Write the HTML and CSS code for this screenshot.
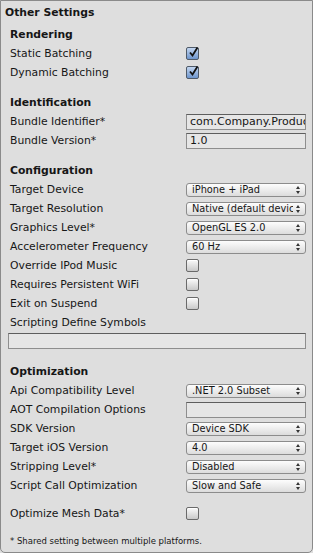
FILE: index.html
```html
<!DOCTYPE html>
<html lang="en">
<head>
    <meta charset="UTF-8">
    <meta name="viewport" content="width=device-width, initial-scale=1.0">
    <title>Other Settings</title>
    <link rel="stylesheet" href="styles.css">
</head>
<body>
    <div class="panel">
        <div class="title">Other Settings</div>

        <div class="group">
            <div class="heading">Rendering</div>
            <div class="row">
                <span class="label">Static Batching</span>
                <span class="check on"><svg viewBox="0 0 13 13"><path d="M3 6.5 L5.5 9.5 L10.5 1.5" /></svg></span>
            </div>
            <div class="row">
                <span class="label">Dynamic Batching</span>
                <span class="check on"><svg viewBox="0 0 13 13"><path d="M3 6.5 L5.5 9.5 L10.5 1.5" /></svg></span>
            </div>
        </div>

        <div class="group">
            <div class="heading">Identification</div>
            <div class="row">
                <span class="label">Bundle Identifier*</span>
                <span class="field">com.Company.ProductName</span>
            </div>
            <div class="row">
                <span class="label">Bundle Version*</span>
                <span class="field">1.0</span>
            </div>
        </div>

        <div class="group">
            <div class="heading">Configuration</div>
            <div class="row">
                <span class="label">Target Device</span>
                <span class="popup"><span class="popup-text">iPhone + iPad</span><span class="arrows"></span></span>
            </div>
            <div class="row">
                <span class="label">Target Resolution</span>
                <span class="popup"><span class="popup-text">Native (default device resolution)</span><span class="arrows"></span></span>
            </div>
            <div class="row">
                <span class="label">Graphics Level*</span>
                <span class="popup"><span class="popup-text">OpenGL ES 2.0</span><span class="arrows"></span></span>
            </div>
            <div class="row">
                <span class="label">Accelerometer Frequency</span>
                <span class="popup"><span class="popup-text">60 Hz</span><span class="arrows"></span></span>
            </div>
            <div class="row">
                <span class="label">Override IPod Music</span>
                <span class="check"></span>
            </div>
            <div class="row">
                <span class="label">Requires Persistent WiFi</span>
                <span class="check"></span>
            </div>
            <div class="row">
                <span class="label">Exit on Suspend</span>
                <span class="check"></span>
            </div>
            <div class="row">
                <span class="label">Scripting Define Symbols</span>
            </div>
            <div class="row wide">
                <span class="field"></span>
            </div>
        </div>

        <div class="group">
            <div class="heading">Optimization</div>
            <div class="row">
                <span class="label">Api Compatibility Level</span>
                <span class="popup"><span class="popup-text">.NET 2.0 Subset</span><span class="arrows"></span></span>
            </div>
            <div class="row">
                <span class="label">AOT Compilation Options</span>
                <span class="field"></span>
            </div>
            <div class="row">
                <span class="label">SDK Version</span>
                <span class="popup"><span class="popup-text">Device SDK</span><span class="arrows"></span></span>
            </div>
            <div class="row">
                <span class="label">Target iOS Version</span>
                <span class="popup"><span class="popup-text">4.0</span><span class="arrows"></span></span>
            </div>
            <div class="row">
                <span class="label">Stripping Level*</span>
                <span class="popup"><span class="popup-text">Disabled</span><span class="arrows"></span></span>
            </div>
            <div class="row">
                <span class="label">Script Call Optimization</span>
                <span class="popup"><span class="popup-text">Slow and Safe</span><span class="arrows"></span></span>
            </div>
            <div class="row spaced">
                <span class="label">Optimize Mesh Data*</span>
                <span class="check"></span>
            </div>
        </div>

        <div class="note">* Shared setting between multiple platforms.</div>
    </div>
</body>
</html>
```

FILE: styles.css
```css
body {
    margin: 0;
    background: #dedede;
    font-family: "DejaVu Sans", sans-serif;
    font-size: 10.8px;
    color: #161616;
}
.panel {
    width: 311px;
    height: 551px;
    border: 1px solid #8a8a8a;
    border-radius: 0 0 5px 5px;
    background: #dedede;
}
.title {
    height: 24px;
    line-height: 24px;
    padding-left: 4px;
    font-weight: bold;
}
.group {
    margin-bottom: 11px;
    padding: 0 6px 0 9px;
}
.heading {
    height: 19px;
    line-height: 19px;
    font-weight: bold;
}
.row {
    display: flex;
    align-items: center;
    height: 19px;
}
.row.spaced {
    margin-top: 9px;
}
.label {
    width: 176px;
    flex: none;
    white-space: nowrap;
}
.check {
    width: 11px;
    height: 11px;
    border: 1px solid #6a6a6a;
    border-radius: 2px;
    background: linear-gradient(#fafafa, #c9c9c9);
    box-shadow: inset 0 1px 0 #fff;
}
.check.on {
    background: linear-gradient(#c3d6f0, #6d95cd);
    border-color: #4f5a68;
    box-shadow: none;
}
.check svg {
    display: block;
    width: 13px;
    height: 13px;
    margin: -2px 0 0 0;
}
.check path {
    fill: none;
    stroke: #111;
    stroke-width: 1.8;
}
.field {
    flex: 1;
    height: 14px;
    line-height: 14px;
    padding-left: 3px;
    border: 1px solid #8e8e8e;
    border-top-color: #5e5e5e;
    background: #e6e6e6;
    overflow: hidden;
    white-space: nowrap;
    font-size: 11px;
}
.row.wide {
    margin-left: -2px;
    height: 19px;
    align-items: flex-start;
    padding-top: 1px;
    box-sizing: border-box;
}
.popup {
    flex: 1;
    display: flex;
    align-items: center;
    height: 12px;
    border: 1px solid #8c8c8c;
    border-radius: 3px;
    background: linear-gradient(#fdfdfd, #dcdcdc);
    font-size: 9.8px;
    overflow: hidden;
}
.popup-text {
    flex: 1;
    padding-left: 5px;
    white-space: nowrap;
    overflow: hidden;
}
.arrows {
    flex: none;
    width: 12px;
    height: 12px;
    position: relative;
}
.arrows::before,
.arrows::after {
    content: "";
    position: absolute;
    left: 3px;
    border-left: 2.5px solid transparent;
    border-right: 2.5px solid transparent;
}
.arrows::before {
    top: 2px;
    border-bottom: 3px solid #333;
}
.arrows::after {
    top: 7px;
    border-top: 3px solid #333;
}
.note {
    padding-left: 9px;
    margin-top: -2px;
    height: 19px;
    line-height: 19px;
    font-size: 8.5px;
}
```
